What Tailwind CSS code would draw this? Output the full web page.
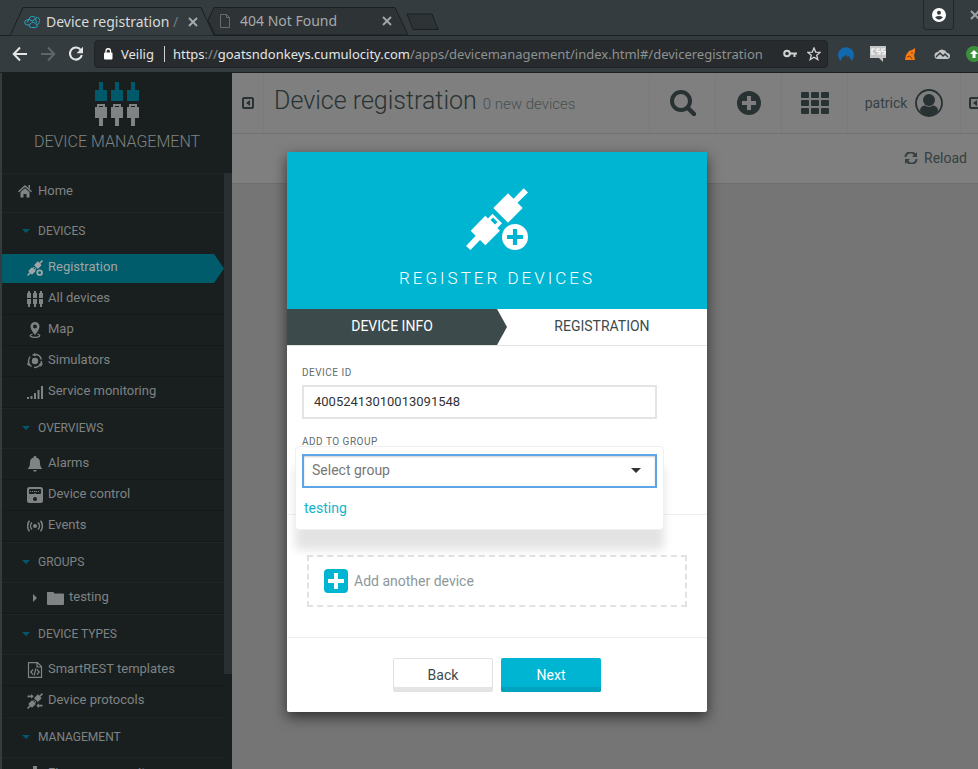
<!DOCTYPE html>
<html lang="en">
<head>
<meta charset="utf-8">
<title>Device registration</title>
<script src="https://cdn.jsdelivr.net/npm/@tailwindcss/browser@4"></script>
</head>
<body class="flex h-screen flex-col overflow-hidden bg-[#353c3f] font-[Roboto,sans-serif] text-sm">

<svg class="hidden" aria-hidden="true">
  <symbol id="plugs" viewBox="0 0 48 46">
    <g class="fill-[#00596a]"><path d="M4 0h4v8h4v11H0V8h4zM20 0h4v8h4v11H16V8h4zM36 0h4v8h4v11H32V8h4z"/></g>
    <path fill="currentColor" fill-rule="evenodd" d="M2 22h8v3h2v11H8v8H4v-8H0V25h2zM4 24v1h4v-1zM18 22h8v3h2v11h-4v8h-4v-8h-4V25h2zM20 24v1h4v-1zM34 22h8v3h2v11h-4v8h-4v-8h-4V25h2zM36 24v1h4v-1z"/>
  </symbol>
  <symbol id="connector" viewBox="0 0 62 62">
    <path fill="currentColor" d="M27.3 20 42 5.3l5.6 5.5L57.7.3 62 4.5 51.500 14.800l5.200 5.200L42 34.700zM4.700 42.700l14.600-15L34 42.700 19.300 57.300 14 52 4.500 62 0 58l9.700-10.200z"/>
    <path fill="currentColor" fill-rule="evenodd" d="M26.500 25.800l9.500 9.500L30 41.500 20.500 32zM27 29.500l-2.500 2.500 4.500 4.500 2.500-2.500z"/>
  </symbol>
  <symbol id="panel" viewBox="0 0 12 12">
    <rect x="1" y="1" width="10" height="10" rx="1" fill="none" stroke="currentColor" stroke-width="2"/><path d="M8 3v6L4 6z" fill="currentColor"/>
  </symbol>
</svg>

<header class="shrink-0 font-['Noto_Sans',sans-serif]">
  <div class="flex h-9 items-end border-b border-[#1b1f21] pl-2.5">
    <div class="relative z-10 -mb-px flex h-[29px] w-[204px] items-center pl-3.5 text-[#d8dbdb]">
      <svg class="absolute inset-0 h-full w-full" viewBox="0 0 204 29" preserveAspectRatio="none"><path d="M0 28.500L13 .5H191L204 28.500" fill="#353c3f" stroke="#1b1f21"/></svg>
      <svg class="relative h-4 w-4" viewBox="0 0 16 16" fill="none" stroke="#22a6c4"><path d="M5 11H3a2.500 2.500 0 0 1-.500-4.900L5 5.500a3.500 3.500 0 0 1 6.500-1.500 3 3 0 0 1 3.800 4.500q-.300 1.500-2.300 2M7.500 13.500a2 2 0 0 1-.500-4 2.300 2.300 0 0 1 4.300.3 1.800 1.800 0 0 1 .2 3.700zM3 8.500l2-3 4 1.500 2.500-3 1 5"/></svg>
      <span class="relative ml-1.5 text-sm">Device registration <span class="text-[#747a7b]">/</span></span>
      <button class="absolute right-4 text-[#a9adae]" aria-label="Close tab"><svg class="h-2.5 w-2.5" viewBox="0 0 10 10" stroke="currentColor" stroke-width="1.800"><path d="M1 1l8 8M9 1L1 9"/></svg></button>
    </div>
    <div class="relative -ml-1.5 flex h-7 w-[200px] items-center pl-3 text-[#a5a9aa]">
      <svg class="absolute inset-0 h-full w-full" viewBox="0 0 200 28" preserveAspectRatio="none"><path d="M0 13L6 .5H187L200 28H7z" fill="#2e3436" stroke="#1b1f21"/></svg>
      <svg class="relative h-3.5 w-2.5" viewBox="0 0 10 14" fill="none" stroke="#666c6e"><path d="M.5.5h6l3 3v10h-9zM6.500.5v3h3"/></svg>
      <span class="relative ml-2.5 text-sm">404 Not Found</span>
      <button class="absolute right-4" aria-label="Close tab"><svg class="h-2.5 w-2.5" viewBox="0 0 10 10" stroke="currentColor" stroke-width="1.800"><path d="M1 1l8 8M9 1L1 9"/></svg></button>
    </div>
    <button class="mb-1 -ml-1" aria-label="New tab"><svg class="h-[18px] w-9" viewBox="0 0 36 18"><path d="M3 1h25l6 15.500H9z" fill="#2e3436" stroke="#1b1f21"/></svg></button>
    <div class="ml-auto flex h-full items-start text-white">
      <button class="flex h-[30px] w-[31px] items-center justify-center rounded-b border border-t-0 border-[#22282a]" aria-label="Profile"><svg class="h-3.5 w-3.5" viewBox="0 0 14 14"><circle cx="7" cy="7" r="7" fill="#fff"/><circle cx="7" cy="4.800" r="2" fill="#353c3f"/><path d="M3 9.300q4-2.600 8 0Q7 14 3 9.300" fill="#353c3f"/></svg></button>
      <button class="mt-2.5 -mr-1 ml-4 text-[#9ca0a1]" aria-label="Close window"><svg class="h-2.5 w-3" viewBox="0 0 12 10" stroke="currentColor" stroke-width="2"><path d="M1 1l8 8M9 1L1 9"/></svg></button>
    </div>
  </div>
  <div class="flex h-[37px] items-center border-b border-[#1b1f21] pl-3 text-[#e4e6e6]">
    <button aria-label="Back"><svg class="h-4 w-4" viewBox="0 0 16 16" fill="none" stroke="currentColor" stroke-width="2"><path d="M15 8H2M8 1.500L1.700 8 8 14.500"/></svg></button>
    <button class="ml-3 text-[#5f6668]" aria-label="Forward"><svg class="h-4 w-4" viewBox="0 0 16 16" fill="none" stroke="currentColor" stroke-width="2"><path d="M1 8h13M8 1.500L14.300 8 8 14.500"/></svg></button>
    <button class="ml-3" aria-label="Reload page"><svg class="h-4 w-4" viewBox="0 0 16 16"><path d="M12.800 4A6 6 0 1 0 13.800 9" fill="none" stroke="currentColor" stroke-width="2.100"/><path d="M15 .8v6.400H8.600z" fill="currentColor"/></svg></button>
    <div class="ml-2.5 flex h-7 min-w-0 flex-1 items-center rounded-sm border border-[#202527] bg-[#272b2d] pl-2">
      <svg class="h-3 w-2.5 shrink-0" viewBox="0 0 10 12"><rect x="1" y="4.500" width="8.500" height="7" rx="1" fill="#fff"/><path d="M3 5V3a2.200 2.200 0 0 1 4.500 0v2" fill="none" stroke="#fff" stroke-width="1.300"/></svg>
      <span class="ml-2 text-[13px]">Veilig</span>
      <span class="ml-2.5 h-4 w-px shrink-0 bg-[#d0d2d2]"></span>
      <input aria-label="Address" class="sr-only" value="https://goatsndonkeys.cumulocity.com/apps/devicemanagement/index.html#/deviceregistration">
      <span class="ml-2 min-w-0 flex-1 whitespace-nowrap text-[13px] text-[#8d9192]"><span class="text-[#e4e6e6]">https</span>://<span class="text-[#e4e6e6]">goatsndonkeys.cumulocity.com</span>/apps/devicemanagement/index.html#/deviceregistration</span>
      <svg class="h-3 w-3.5 shrink-0" viewBox="0 0 14 12" fill="none" stroke="#d0d2d2" stroke-width="2"><circle cx="4" cy="5.500" r="2.800"/><path d="M7 5.500h7M11.500 5v4"/></svg>
      <svg class="mr-1.5 ml-2.5 h-3.5 w-3.5 shrink-0" viewBox="0 0 14 14" fill="none" stroke="#d0d2d2" stroke-width="1.300"><path d="M7 1l1.700 4.100 4.400.3-3.400 2.800L10.800 12.600 7 10.200l-3.800 2.400 1.100-4.400L.9 5.400l4.400-.3z"/></svg>
    </div>
    <div class="-mr-1 flex items-center gap-4 pl-2.5">
      <svg class="h-4 w-4" viewBox="0 0 16 16"><path d="M2.500 15A8 8 0 1 1 13.500 15L11 10 9.500 11 8 8.500 6.500 11 5 10z" fill="#1269ad"/></svg>
      <svg class="h-4 w-4" viewBox="0 0 16 16"><path d="M0 0h16v12h-3v4l-4-4H0z" fill="#c4c4c4"/><path d="M5 3H2v5h3M10 3H7v2.500h3V8H7M15 3h-3v2.500h3V8h-3" fill="none" stroke="#fff" stroke-width="1.200"/></svg>
      <svg class="h-4 w-4" viewBox="0 0 16 16"><path d="M13 2v4l-1 3 1 5H3l1-5 3-4 3-1z" fill="#f57c13"/><path d="M5 11l3-1 2 3M10 6v2" stroke="#8e3c12" fill="none"/></svg>
      <svg class="h-4 w-4" viewBox="0 0 16 16"><path d="M4 13a3.500 3.500 0 0 1 0-7 5 5 0 0 1 9 1 3 3 0 0 1 0 6z" fill="#c4c6c6"/><path d="M2 11l4-4 3 3 2-2 3 3" fill="none" stroke="#353c3f" stroke-width="1.500"/></svg>
      <svg class="h-4 w-4" viewBox="0 0 16 16"><circle cx="8" cy="8" r="8" fill="#3a8f3d"/><path d="M8 4l4 4H9.500v4h-3V8H4z" fill="#fff"/></svg>
    </div>
  </div>
</header>

<div class="relative -mr-3.5 ml-0.5 flex min-h-0 flex-1 overflow-hidden">
  <aside class="flex w-[230px] shrink-0 flex-col bg-[#191f1f] text-[#7f8383]">
    <div class="flex h-[100px] shrink-0 flex-col items-center pt-[9px]">
      <svg class="ml-1 h-[46px] w-12" aria-hidden="true"><use href="#plugs"/></svg>
      <span class="mt-0.5 text-base font-light">DEVICE MANAGEMENT</span>
    </div>
    <div class="flex min-h-0 flex-1">
      <nav class="min-w-0 flex-1 text-[13px]">
        <a href="#" class="flex h-[39px] items-center border-t border-[#1e2525] pb-1 pl-4"><svg class="mr-1.5 h-3.5 w-3.5" viewBox="0 0 14 14" fill="currentColor"><path d="M7 1l7 6.200-1 1L7 3 1 8.200l-1-1zM10.500 1H12v4l-1.500-1.300zM2.500 8L7 4.200 11.500 8v5.500H8.500V10h-3v3.500h-3z"/></svg>Home</a>
        <h2 class="flex h-[41px] items-center border-t border-[#1e2525] pb-1 pl-5 text-xs"><span class="mr-2 h-0 w-0 border-x-4 border-t-4 border-x-transparent border-t-[#00596a]"></span>DEVICES</h2>
        <a href="#" class="flex h-[31px] items-center bg-[#005c6b] pb-0.5 pl-[25px] text-[#9fa5a5] [clip-path:polygon(0_3%,95.500%_3%,100%_50%,95.500%_97%,0_97%)]"><svg class="mr-[5px] h-4 w-4" viewBox="0 0 62 62" fill="currentColor"><use href="#connector"/><circle cx="49" cy="49" r="9" fill="none" stroke="currentColor" stroke-width="7"/></svg>Registration</a>
        <a href="#" class="flex h-[31px] items-center border-b border-[#141919] pb-px pl-[25px]"><svg class="mr-[5px] h-4 w-4" viewBox="0 0 16 16" fill="currentColor"><path d="M1 0h2v2h1v5H0V2h1zM7 0h2v2h1v5H6V2h1zM13 0h2v2h1v5h-4V2h1zM0 8h4v5H3v3H1v-3H0zM6 8h4v5H9v3H7v-3H6zM12 8h4v5h-1v3h-2v-3h-1z"/></svg>All devices</a>
        <a href="#" class="flex h-[31px] items-center border-b border-[#141919] pb-px pl-[25px]"><svg class="mr-[5px] h-4 w-4" viewBox="0 0 16 16" fill="currentColor"><path fill-rule="evenodd" d="M8 0a4.500 4.500 0 0 1 4.500 4.500C12.500 8 8 13 8 13S3.500 8 3.500 4.500A4.500 4.500 0 0 1 8 0zm0 2.500a2 2 0 1 0 0 4 2 2 0 0 0 0-4z"/><path d="M5.500 12C1 13.500 4 15.400 8 15.400s7-1.900 2.500-3.400" fill="none" stroke="currentColor" stroke-width="1.200"/></svg>Map</a>
        <a href="#" class="flex h-[31px] items-center border-b border-[#141919] pb-px pl-[25px]"><svg class="mr-[5px] h-4 w-4" viewBox="0 0 16 16" fill="currentColor"><circle cx="8" cy="8" r="3.200"/><circle cx="8" cy="8" r="6.500" fill="none" stroke="currentColor" stroke-width="1.400" stroke-dasharray="11 2.600"/><path d="M7 0l3 1.800L7 3.500zM0 10l3 1-2 2zM16 10l-2 4-2-3z"/></svg>Simulators</a>
        <a href="#" class="flex h-[31px] items-center border-b border-[#141919] pb-px pl-[25px]"><svg class="mr-[5px] h-4 w-4" viewBox="0 0 16 16" fill="currentColor"><path d="M0 13h2v2H0zM3.500 12h2v3h-2zM7 9h2v6H7zM10.500 6h2v9h-2zM14 2h2v13h-2z"/></svg>Service monitoring</a>
        <h2 class="flex h-[41px] items-center border-y border-[#1e2525] pb-0.5 pl-5 text-xs"><span class="mr-2 h-0 w-0 border-x-4 border-t-4 border-x-transparent border-t-[#00596a]"></span>OVERVIEWS</h2>
        <a href="#" class="flex h-[31px] items-center border-b border-[#141919] pb-px pl-[25px]"><svg class="mr-[5px] h-4 w-4" viewBox="0 0 16 16" fill="currentColor"><path d="M8 0a1.300 1.300 0 0 1 1.300 1.500C12 2 13 4 13 6.500c0 3.500.8 5 2.500 6.500H.5C2.200 11.500 3 10 3 6.500 3 4 4 2 6.700 1.500A1.300 1.300 0 0 1 8 0zM6.300 14h3.400a1.700 1.700 0 0 1-3.400 0z"/></svg>Alarms</a>
        <a href="#" class="flex h-[31px] items-center border-b border-[#141919] pb-px pl-[25px]"><svg class="mr-[5px] h-4 w-4" viewBox="0 0 16 16"><rect width="16" height="16" rx="2.500" fill="currentColor"/><rect x="2" y="2" width="12" height="5" rx="1" fill="#191f1f"/><path d="M3 4.500h10M8 7V4" stroke="currentColor" stroke-dasharray="1 1"/><circle cx="8" cy="12" r="2" fill="#191f1f"/></svg>Device control</a>
        <a href="#" class="flex h-[31px] items-center border-b border-[#141919] pb-px pl-[25px]"><svg class="mr-[5px] h-4 w-4" viewBox="0 0 16 16" fill="none" stroke="currentColor" stroke-width="1.500"><circle cx="8" cy="8" r="2" fill="currentColor" stroke="none"/><path d="M5 4.500a5 5 0 0 0 0 7M11 4.500a5 5 0 0 1 0 7M2.500 2.800a8 8 0 0 0 0 10.400M13.500 2.800a8 8 0 0 1 0 10.400"/></svg>Events</a>
        <h2 class="flex h-[41px] items-center border-y border-[#1e2525] pb-0.5 pl-5 text-xs"><span class="mr-2 h-0 w-0 border-x-4 border-t-4 border-x-transparent border-t-[#00596a]"></span>GROUPS</h2>
        <a href="#" class="flex h-[31px] items-center border-b border-[#141919] pb-px pl-[31px]"><span class="mr-2.5 h-0 w-0 border-y-4 border-l-4 border-y-transparent border-l-current"></span><svg class="mr-[5px] h-4 w-[17px]" viewBox="0 0 17 16" fill="currentColor"><path d="M0 2.500Q0 2 .5 2H6q1 0 1 1v.5h9q1 0 1 1V14q0 1-1 1H1q-1 0-1-1z"/></svg>testing</a>
        <h2 class="flex h-[41px] items-center border-y border-[#1e2525] pb-0.5 pl-5 text-xs"><span class="mr-2 h-0 w-0 border-x-4 border-t-4 border-x-transparent border-t-[#00596a]"></span>DEVICE TYPES</h2>
        <a href="#" class="flex h-[31px] items-center border-b border-[#141919] pb-px pl-[25px]"><svg class="mr-[5px] h-4 w-4" viewBox="0 0 16 16" fill="none" stroke="currentColor" stroke-width="1.200"><path d="M1.500.6h9l4 4v10.800h-13zM10 .6V5h4.500M6 7.500L3.800 10 6 12.500M10 7.500l2.200 2.500L10 12.500M8.800 6.500l-1.600 7"/></svg>SmartREST templates</a>
        <a href="#" class="flex h-[31px] items-center border-b border-[#141919] pb-px pl-[25px]"><svg class="mr-[5px] h-4 w-4" viewBox="0 0 62 62"><use href="#connector"/><path d="M2 10h14V4l10 9-10 9v-6H2zM60 46H46v-6l-10 9 10 9v-6h14z" fill="currentColor"/></svg>Device protocols</a>
        <h2 class="flex h-[41px] items-center border-y border-[#1e2525] pb-0.5 pl-5 text-xs"><span class="mr-2 h-0 w-0 border-x-4 border-t-4 border-x-transparent border-t-[#00596a]"></span>MANAGEMENT</h2>
        <a href="#" class="flex h-[31px] items-center pl-[25px]"><svg class="mr-[5px] h-4 w-4" viewBox="0 0 16 16" fill="currentColor"><path d="M6 0h4v6h4l-6 6-6-6h4zM0 13h16v3H0z"/></svg>Firmware repository</a>
      </nav>
      <div class="w-2 shrink-0 bg-[#191f1f]"><div class="h-[84%] bg-[#2a3031]"></div></div>
    </div>
  </aside>

  <main class="flex min-w-0 flex-1 flex-col bg-[#757575] text-[#283233]">
    <div class="flex h-[61px] shrink-0 items-stretch border-b border-[#727272] bg-[#7f7f7f]">
      <button class="flex w-8 items-center justify-center border-r border-[#7a7a7a]" aria-label="Toggle navigator"><svg class="h-3 w-3"><use href="#panel"/></svg></button>
      <h1 class="flex flex-1 items-baseline gap-1.5 pt-2.5 pl-2.5 text-[25px] font-light whitespace-nowrap">Device registration <small class="text-[15px] font-light text-[#465051]">0 new devices</small></h1>
      <button class="flex w-[66px] items-center justify-center border-l border-[#7a7a7a]" aria-label="Search"><svg class="h-[26px] w-[26px]" viewBox="0 0 26 26" fill="none" stroke="currentColor"><circle cx="11" cy="11" r="9" stroke-width="4"/><path d="M18 18l6 6" stroke-width="4.500" stroke-linecap="round"/></svg></button>
      <button class="flex w-[66px] items-center justify-center border-l border-[#7a7a7a]" aria-label="Add"><svg class="h-6 w-6" viewBox="0 0 24 24"><circle cx="12" cy="12" r="12" fill="currentColor"/><path d="M12 5v14M5 12h14" stroke="#7f7f7f" stroke-width="4"/></svg></button>
      <button class="flex w-[66px] items-center justify-center border-l border-[#7a7a7a]" aria-label="Applications"><svg class="h-[22px] w-7" viewBox="0 0 28 22" fill="currentColor"><rect width="8" height="6" rx="1"/><rect x="10" width="8" height="6" rx="1"/><rect x="20" width="8" height="6" rx="1"/><rect y="8" width="8" height="6" rx="1"/><rect x="10" y="8" width="8" height="6" rx="1"/><rect x="20" y="8" width="8" height="6" rx="1"/><rect y="16" width="8" height="6" rx="1"/><rect x="10" y="16" width="8" height="6" rx="1"/><rect x="20" y="16" width="8" height="6" rx="1"/></svg></button>
      <button class="flex w-[113px] items-center justify-center gap-2 border-l border-[#7a7a7a]"><span class="text-sm text-[#364041]">patrick</span><svg class="h-7 w-7" viewBox="0 0 28 28"><circle cx="14" cy="14" r="13" fill="none" stroke="currentColor" stroke-width="1.800"/><circle cx="14" cy="11" r="6" fill="currentColor"/><path d="M5 22q0-5 5-5.500 4 2.500 8 0 5 .5 5 5.500-4 5-9 5t-9-5z" fill="currentColor"/></svg></button>
      <button class="flex w-8 items-center border-l border-[#7a7a7a] pl-2" aria-label="Toggle drawer"><svg class="h-3 w-3"><use href="#panel"/></svg></button>
    </div>
    <div class="flex h-[50px] shrink-0 items-center justify-end border-b border-[#6d6d6d] bg-[#7f7f7f] pr-[25px] pb-0.5">
      <button class="flex items-center gap-1.5 text-sm text-[#364041]"><svg class="h-3 w-3.5" viewBox="0 0 14 12"><path d="M1.500 5A5 5 0 0 1 11 3.200M12.500 7A5 5 0 0 1 3 8.800" fill="none" stroke="currentColor" stroke-width="2"/><path d="M13 0v5H8zM1 12V7h5z" fill="currentColor"/></svg>Reload</button>
    </div>
  </main>

  <section role="dialog" aria-labelledby="dialog-title" class="absolute top-[79px] left-1/2 w-[420px] -translate-x-1/2 rounded-xs bg-white text-[#3c4a4c] shadow-[0_5px_14px_rgba(0,0,0,0.6)]">
    <div class="flex h-[157px] flex-col items-center bg-[#00b5d2] pt-9 text-white">
      <svg class="h-[62px] w-[62px]" viewBox="0 0 62 62"><use href="#connector"/><circle cx="49" cy="49" r="13" fill="currentColor"/><path d="M49 41v16M41 49h16" stroke="#00b5d2" stroke-width="4.200"/></svg>
      <h2 id="dialog-title" class="mt-3.5 text-[17px] leading-7 font-light tracking-[3px]">REGISTER DEVICES</h2>
    </div>
    <ol class="relative flex h-[37px] border-b border-[#e2e4e4] pb-0 text-sm">
      <li class="flex w-1/2 items-center justify-center bg-[#3c4a4c] pb-0.5 text-white">DEVICE INFO<svg class="absolute top-0 left-1/2 h-9 w-2.5" viewBox="0 0 10 36" preserveAspectRatio="none"><path d="M0 0l10 18L0 36z" fill="#3c4a4c"/></svg></li>
      <li class="flex w-1/2 items-center justify-center pb-0.5">REGISTRATION</li>
    </ol>
    <form>
      <div class="h-[169px] border-b border-[#eeefef] pt-[21px] pr-[50px] pl-[15px]">
        <label for="device-id" class="block text-[10px] leading-3 tracking-wider text-[#5f6c6d]">DEVICE ID</label>
        <input id="device-id" value="40052413010013091548" class="mt-1.5 block h-[34px] w-full border-2 border-[#e3e5e5] px-2.5 pb-0.5 text-[13px] text-[#333] outline-none">
        <label for="group" class="mt-[17px] block text-[10px] leading-3 tracking-wider text-[#5f6c6d]">ADD TO GROUP</label>
        <div class="relative mt-1.5">
          <div class="absolute -inset-x-[7px] -top-2 h-[84px] rounded-sm border border-[#efefef] bg-white pt-[51px] pl-2 shadow-[0_20px_10px_rgba(0,0,0,0.110)]">
            <button type="button" class="text-sm text-[#14b5cc]">testing</button>
          </div>
          <select id="group" class="relative block h-[34px] w-full appearance-none border-2 border-[#5ea5e6] bg-white px-2 pb-0.5 text-sm text-[#777] shadow-[inset_0_1px_2px_rgba(0,0,0,0.2)] outline-none"><option>Select group</option><option>testing</option></select>
          <span class="pointer-events-none absolute top-3.5 right-4 h-0 w-0 border-x-[5px] border-t-[5px] border-x-transparent border-t-[#333]"></span>
        </div>
      </div>
      <div class="h-[123px] border-b border-[#eeefef] px-5 pt-10">
        <button type="button" class="flex h-[52px] w-full items-center gap-1.5 border-2 border-dashed border-[#e2e2e2] pl-[15px] text-sm text-[#8d9899]"><svg class="h-6 w-6" viewBox="0 0 24 24"><rect width="24" height="24" rx="4" fill="#00b5d2"/><path d="M12 4v16M4 12h16" stroke="#fff" stroke-width="4"/></svg>Add another device</button>
      </div>
      <div class="flex justify-center gap-2 py-5">
        <button type="button" class="h-[34px] w-[100px] rounded-xs border border-[#dfe2e2] text-sm shadow-[inset_0_-4px_0_#e4e4e4]">Back</button>
        <button type="submit" class="h-[34px] w-[100px] rounded-xs bg-[#00b5d2] text-sm text-white shadow-[inset_0_-5px_0_#00a3bd]">Next</button>
      </div>
    </form>
  </section>
</div>
</body>
</html>
